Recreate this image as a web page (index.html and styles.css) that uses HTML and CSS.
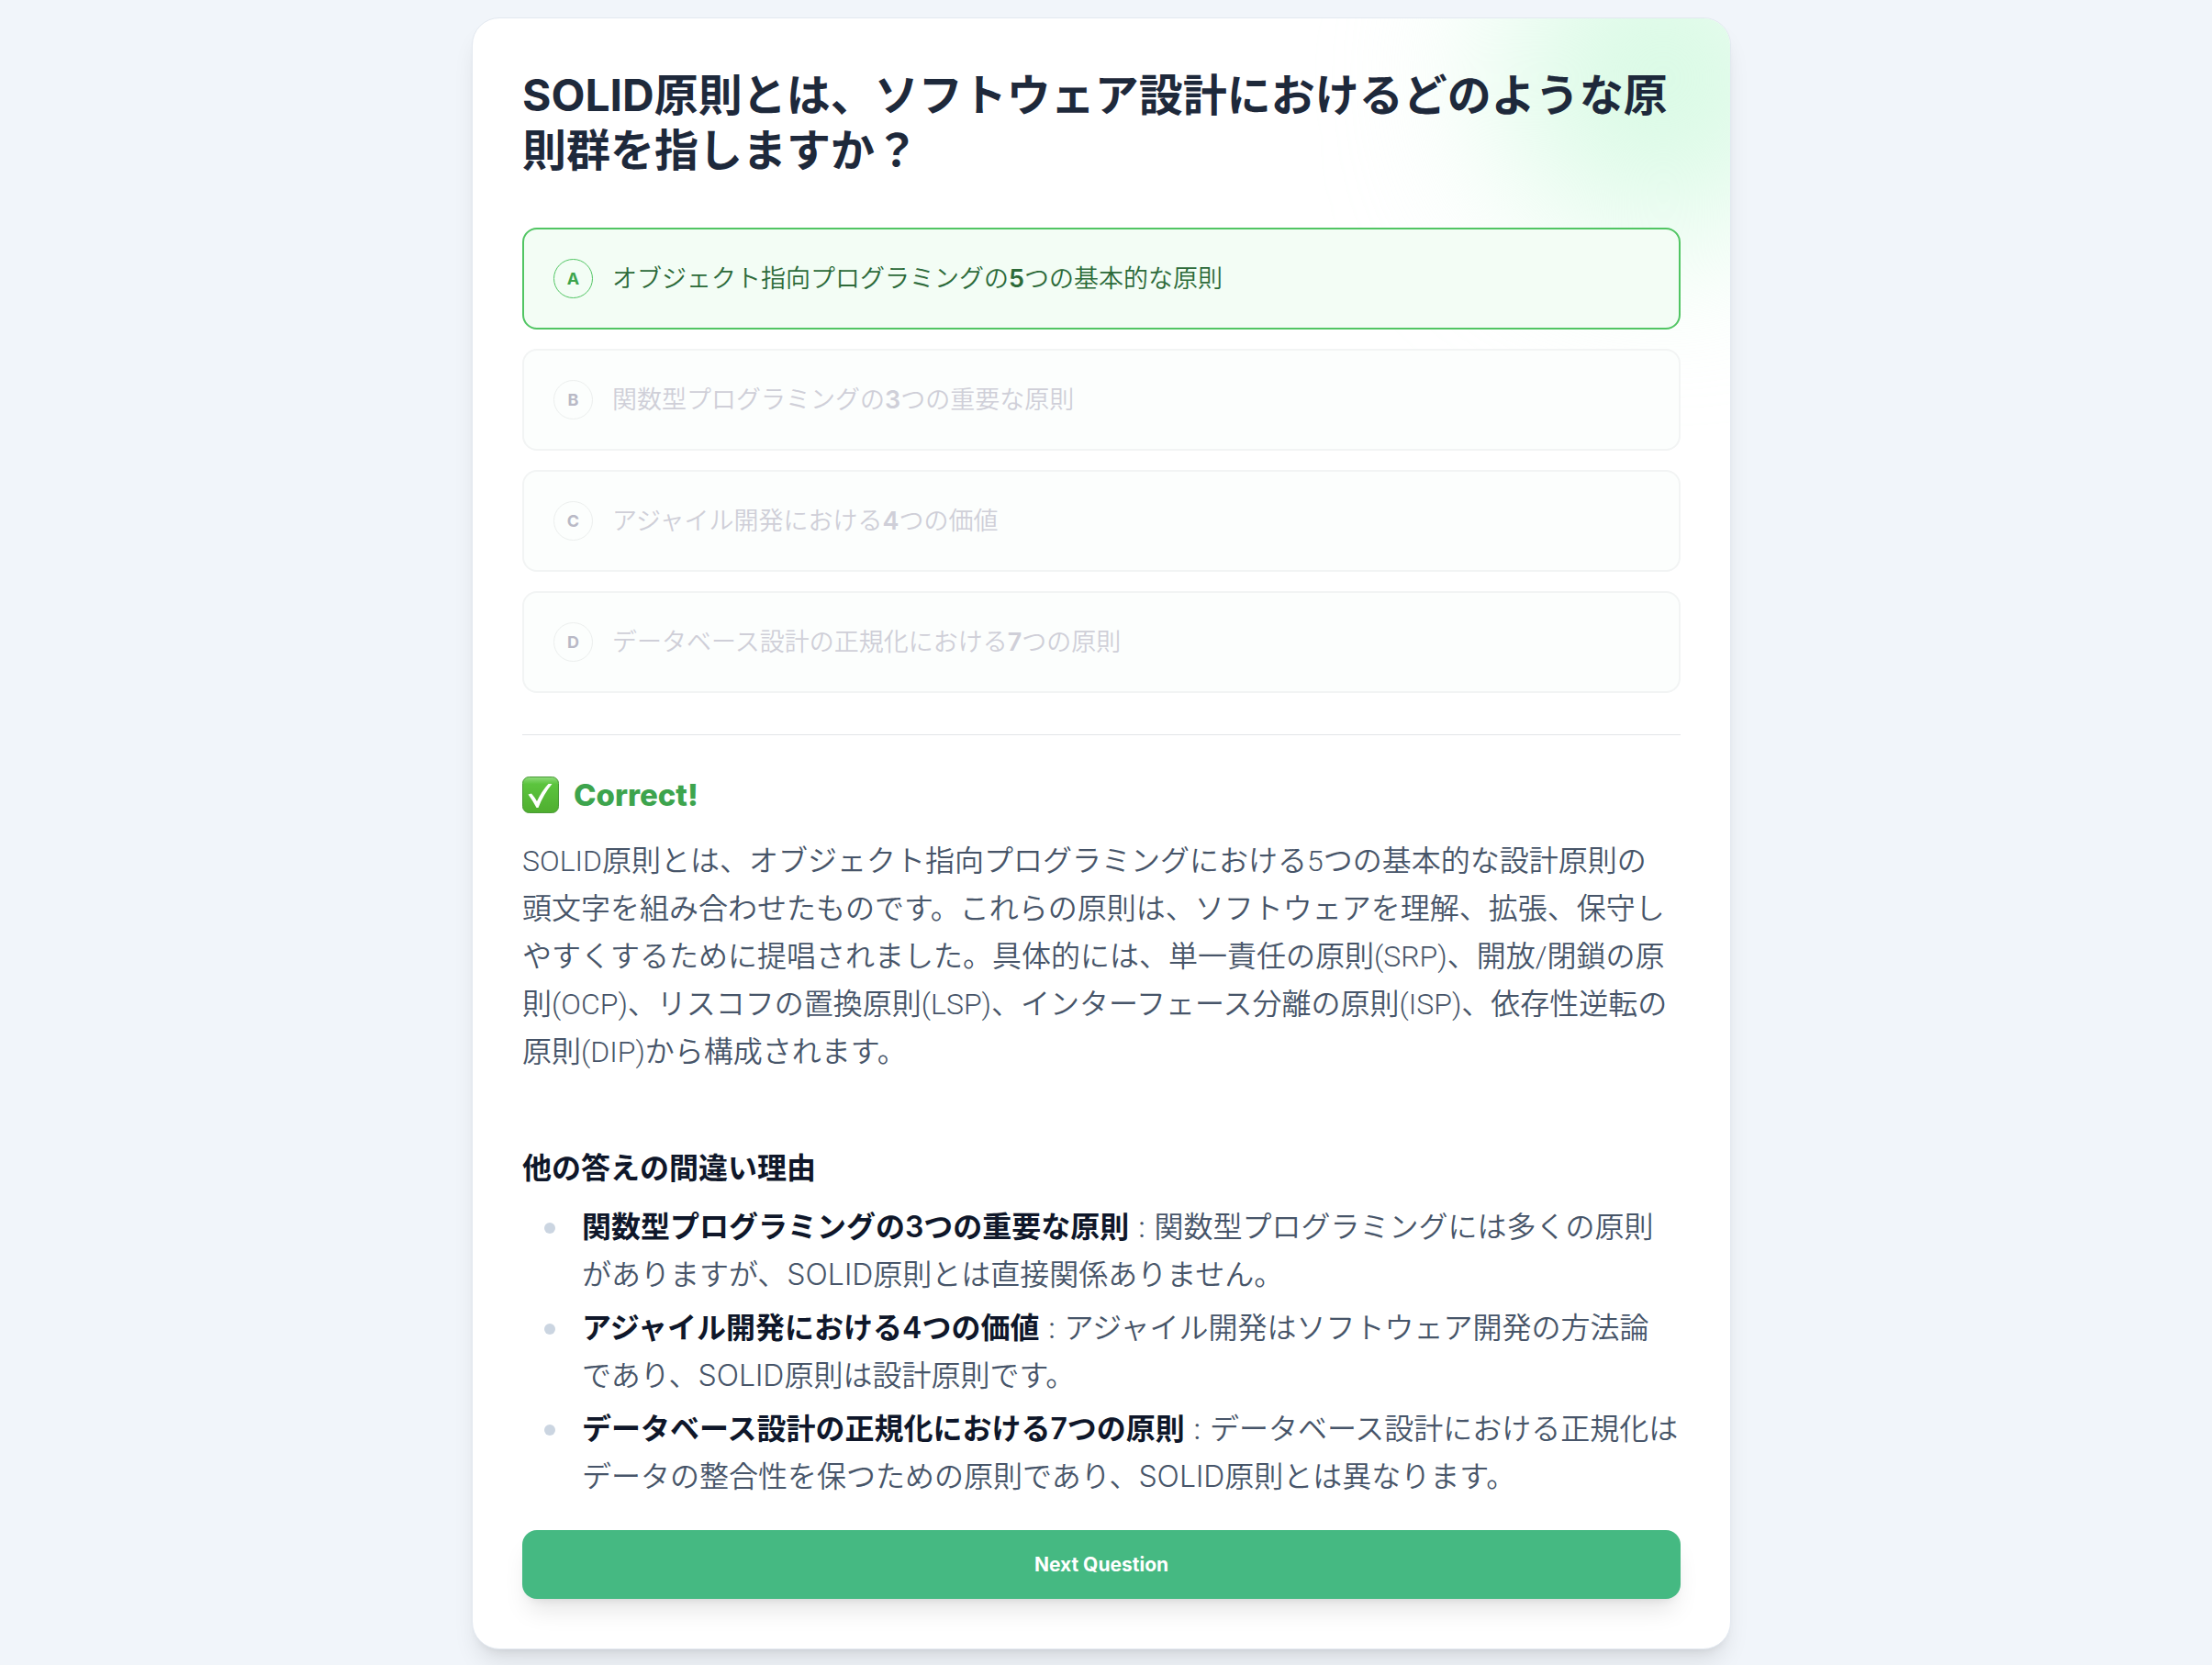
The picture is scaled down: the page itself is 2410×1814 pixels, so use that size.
FILE: index.html
```html
<!DOCTYPE html>
<html lang="ja">

<head>
    <meta charset="UTF-8">
    <meta name="viewport" content="width=device-width, initial-scale=1.0">
    <title>Quiz</title>
    <link rel="stylesheet" href="styles.css">
</head>

<body>

    <main class="page">
        <div class="card">
            <div class="card-glow"></div>

            <h1 class="question">SOLID原則とは、ソフトウェア設計におけるどのような原則群を指しますか？</h1>

            <!-- Answers -->
            <div class="options">
                <button type="button" class="option correct">
                    <span class="letter">A</span>
                    <span class="option-text">オブジェクト指向プログラミングの<b>5</b>つの基本的な原則</span>
                </button>
                <button type="button" class="option" disabled>
                    <span class="letter">B</span>
                    <span class="option-text">関数型プログラミングの<b>3</b>つの重要な原則</span>
                </button>
                <button type="button" class="option" disabled>
                    <span class="letter">C</span>
                    <span class="option-text">アジャイル開発における<b>4</b>つの価値</span>
                </button>
                <button type="button" class="option" disabled>
                    <span class="letter">D</span>
                    <span class="option-text">データベース設計の正規化における<b>7</b>つの原則</span>
                </button>
            </div>

            <!-- Explanation -->
            <section class="explanation">
                <h2 class="result">
                    <svg class="result-icon" viewBox="0 0 40 40" aria-hidden="true">
                        <defs>
                            <linearGradient id="checkFill" x1="0" y1="0" x2="0" y2="1">
                                <stop offset="0" stop-color="#8fdc7c" />
                                <stop offset="0.2" stop-color="#5cc43e" />
                                <stop offset="1" stop-color="#4fae2f" />
                            </linearGradient>
                        </defs>
                        <rect x="0.500" y="0.500" width="39" height="39" rx="7" fill="url(#checkFill)" stroke="#4a9a38" />
                        <path d="M6.500 19.500 L10 18.500 Q13.500 22.500 16 27 Q21.500 15.500 28.500 8 L32.500 8 Q23 19.500 17.500 34 L15.500 34 Q11.500 26.500 6.500 19.500 Z" fill="#fff" />
                    </svg>
                    Correct!
                </h2>
                <p class="explanation-text">SOLID原則とは、オブジェクト指向プログラミングにおける5つの基本的な設計原則の<span class="nowrap">頭文字</span>を組み合わせたものです。これらの原則は、ソフトウェアを理解、拡張、保守しやすくするために提唱されました。具体的には、単一責任の原則(SRP)、開放/閉鎖の原則(OCP)、リスコフの置換原則(LSP)、インターフェース分離の原則(ISP)、依存性逆転の原則(DIP)から構成されます。</p>

                <h3 class="wrong-title">他の答えの間違い理由</h3>
                <ul class="wrong-list">
                    <li>
                        <div><strong>関数型プログラミングの3つの重要な原則</strong> : 関数型プログラミングには多くの原則がありますが、SOLID原則とは直接関係ありません。</div>
                    </li>
                    <li>
                        <div><strong>アジャイル開発における4つの価値</strong> : アジャイル開発はソフトウェア開発の方法論<span class="nowrap">であり、</span>SOLID原則は設計原則です。</div>
                    </li>
                    <li>
                        <div><strong>データベース設計の正規化における7つの原則</strong> : データベース設計における正規化はデータの整合性を保つための原則であり、SOLID原則とは異なります。</div>
                    </li>
                </ul>
            </section>

            <button type="button" class="next-btn">Next Question</button>
        </div>
    </main>

</body>

</html>
```
FILE: styles.css
```css
/* Global Styles */
* {
    box-sizing: border-box;
}

body {
    margin: 0;
    font-family: Inter, "Noto Sans CJK JP", sans-serif;
    background-color: #f1f5fa;
    color: #475569;
}

h1,
h2,
h3,
p,
ul {
    margin: 0;
    padding: 0;
}

button {
    font-family: inherit;
}

.nowrap {
    white-space: nowrap;
}

.page {
    padding: 19px 18px 18px 8px;
}

/* Card */
.card {
    position: relative;
    max-width: 1372px;
    margin: 0 auto;
    padding: 54px;
    background-color: #fff;
    border: 1px solid #e2e8f0;
    border-radius: 30px;
    box-shadow: 0 18px 27px -6px rgba(0, 0, 0, 0.1), 0 7px 11px -7px rgba(0, 0, 0, 0.1);
    overflow: hidden;
}

.card-glow {
    position: absolute;
    top: -110px;
    right: -102px;
    width: 350px;
    height: 350px;
    border-radius: 50%;
    background-color: #d8fae4;
    filter: blur(90px);
}

.question {
    position: relative;
    margin-bottom: 54px;
    font-size: 48px;
    line-height: 60px;
    font-weight: 700;
    color: #1e293b;
}

/* Answers */
.options {
    position: relative;
    display: flex;
    flex-direction: column;
    gap: 21px;
    padding-bottom: 45px;
    border-bottom: 1px solid #e2e5e8;
}

.option {
    display: flex;
    align-items: center;
    gap: 21px;
    padding: 32px;
    border: 2px solid #f2f4f4;
    border-radius: 16px;
    background-color: #fcfefd;
    color: #cfcfd8;
    font-size: 27px;
    line-height: 43px;
    font-weight: 350;
    text-align: left;
}

.option b {
    font-weight: 600;
}

.letter {
    flex: none;
    width: 43px;
    height: 43px;
    border: 1px solid #ecefee;
    border-radius: 50%;
    color: #b9b9c6;
    font-size: 18px;
    line-height: 41px;
    font-weight: 700;
    text-align: center;
}

.option.correct {
    border-color: #51c563;
    background-color: #f3fdf5;
    color: #2c6a39;
}

.option.correct .letter {
    border-color: #51c563;
    color: #3da44d;
}

/* Explanation */
.explanation {
    padding-top: 43px;
    font-size: 32px;
    line-height: 52px;
    font-weight: 350;
}

.explanation-text {
    font-family: Roboto, "Noto Sans CJK JP", sans-serif;
}

.result {
    display: flex;
    align-items: center;
    gap: 16px;
    margin-bottom: 24px;
    font-size: 33px;
    line-height: 44px;
    font-weight: 800;
    color: #3da44d;
}

.result-icon {
    width: 40px;
    height: 40px;
}

.wrong-title {
    margin-top: 75px;
    margin-bottom: 12px;
    font-size: 32px;
    line-height: 52px;
    font-weight: 600;
    color: #0f172a;
}

.wrong-list {
    display: flex;
    flex-direction: column;
    gap: 6px;
    margin-bottom: 32px;
    padding-left: 24px;
    list-style: none;
}

.wrong-list li {
    display: flex;
    gap: 29px;
}

.wrong-list li::before {
    content: "";
    flex: none;
    width: 12px;
    height: 12px;
    margin-top: 21px;
    border-radius: 50%;
    background-color: #cbd5e1;
}

.wrong-list strong {
    font-weight: 600;
    color: #0f172a;
}

.next-btn {
    display: block;
    width: 100%;
    padding: 22px;
    border: none;
    border-radius: 16px;
    background-color: #45b982;
    color: #fff;
    font-size: 21px;
    line-height: 31px;
    font-weight: 700;
    box-shadow: 0 18px 27px -6px rgba(0, 0, 0, 0.1), 0 7px 11px -7px rgba(0, 0, 0, 0.1);
    cursor: pointer;
}
```
